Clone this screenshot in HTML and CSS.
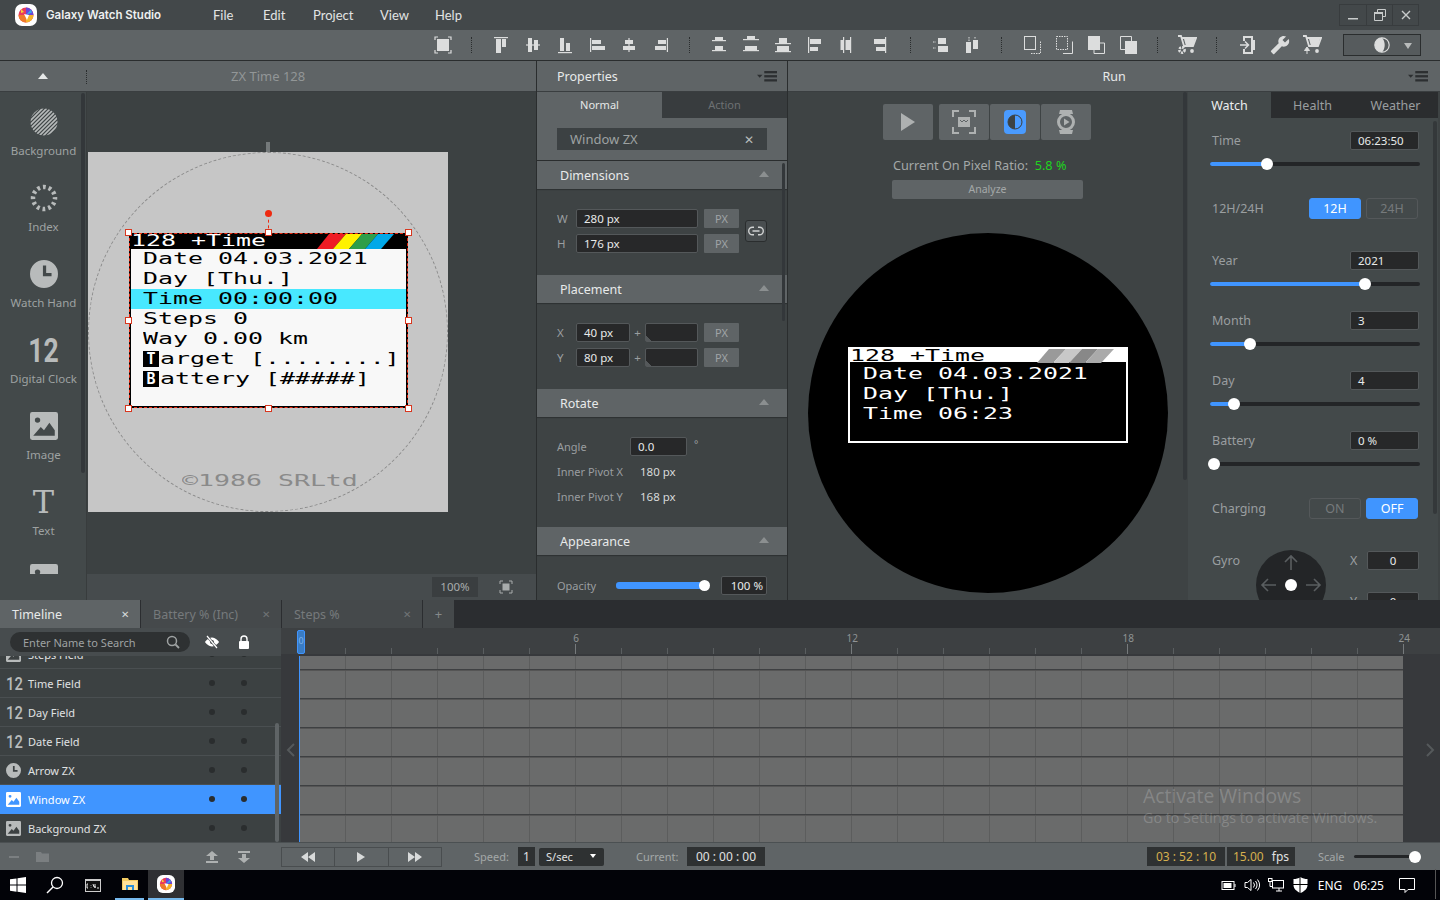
FILE: index.html
```html
<!DOCTYPE html>
<html lang="en">
<head>
<meta charset="utf-8">
<title>Galaxy Watch Studio</title>
<link rel="stylesheet" href="styles.css">
</head>
<body>
<svg class="sprite" width="0" height="0" aria-hidden="true">
  <defs>
    <symbol id="i-full" viewBox="0 0 20 20"><path d="M2 5V2h3M15 2h3v3M18 15v3h-3M5 18H2v-3" fill="none" stroke="currentColor" stroke-width="1.2"/><rect x="4" y="4" width="12" height="12"/></symbol>
    <symbol id="a-top" viewBox="0 0 20 20"><rect x="3" y="2" width="14" height="1.2"/><rect x="5" y="4" width="5" height="14"/><rect x="11" y="4" width="4" height="8"/></symbol>
    <symbol id="a-mid" viewBox="0 0 20 20"><rect x="3" y="9.4" width="14" height="1.2"/><rect x="5" y="3" width="4" height="14"/><rect x="11" y="5" width="4" height="10"/></symbol>
    <symbol id="a-bot" viewBox="0 0 20 20"><rect x="3" y="17" width="14" height="1.2"/><rect x="5" y="3" width="4" height="13"/><rect x="11" y="8" width="4" height="8"/></symbol>
    <symbol id="a-left" viewBox="0 0 20 20"><rect x="3" y="3" width="1.2" height="14"/><rect x="5" y="5" width="9" height="4"/><rect x="5" y="11" width="13" height="4"/></symbol>
    <symbol id="a-cen" viewBox="0 0 20 20"><rect x="9.4" y="3" width="1.2" height="14"/><rect x="6" y="5" width="8" height="4"/><rect x="4" y="11" width="12" height="4"/></symbol>
    <symbol id="a-right" viewBox="0 0 20 20"><rect x="15.8" y="3" width="1.2" height="14"/><rect x="7" y="5" width="8" height="4"/><rect x="4" y="11" width="11" height="4"/></symbol>
    <symbol id="d-a" viewBox="0 0 20 20"><rect x="3" y="5" width="14" height="1.2"/><rect x="3" y="15" width="14" height="1.2"/><rect x="6" y="2" width="8" height="3"/><rect x="6" y="11" width="8" height="4"/></symbol>
    <symbol id="d-b" viewBox="0 0 20 20"><rect x="2" y="4" width="16" height="1.2"/><rect x="2" y="15" width="16" height="1.2"/><rect x="6" y="1" width="8" height="3"/><rect x="4" y="11" width="12" height="4"/></symbol>
    <symbol id="d-c" viewBox="0 0 20 20"><rect x="2" y="16" width="16" height="1.2"/><rect x="2" y="8" width="16" height="1.2"/><rect x="6" y="3" width="8" height="5"/><rect x="4" y="11" width="12" height="5"/></symbol>
    <symbol id="d-d" viewBox="0 0 20 20"><rect x="3" y="2" width="1.2" height="16"/><rect x="5" y="4" width="11" height="5"/><rect x="5" y="12" width="8" height="4"/></symbol>
    <symbol id="d-e" viewBox="0 0 20 20"><rect x="6" y="2" width="1.2" height="16"/><rect x="13" y="2" width="1.2" height="16"/><rect x="3.500" y="5" width="2.500" height="10"/><rect x="8.500" y="5" width="4.500" height="10"/></symbol>
    <symbol id="d-f" viewBox="0 0 20 20"><rect x="16" y="2" width="1.2" height="16"/><rect x="5" y="4" width="11" height="5"/><rect x="7" y="12" width="9" height="4"/></symbol>
    <symbol id="o-a" viewBox="0 0 20 20"><rect x="8" y="3" width="8" height="6"/><rect x="8" y="11" width="10" height="6"/><path d="M3 7h3M3 13h3" stroke="currentColor" stroke-dasharray="1.5 1" fill="none"/></symbol>
    <symbol id="o-b" viewBox="0 0 20 20"><rect x="4" y="7" width="5" height="11"/><rect x="11" y="5" width="5" height="9"/><path d="M7 2v4M13 2v2" stroke="currentColor" stroke-dasharray="1.5 1" fill="none"/></symbol>
    <symbol id="c-a" viewBox="0 0 20 20"><rect x="2.5" y="1.5" width="11" height="13" fill="none" stroke="currentColor"/><path d="M9 18.5h9.500v-12" fill="none" stroke="currentColor" stroke-dasharray="1.500 1"/></symbol>
    <symbol id="c-b" viewBox="0 0 20 20"><rect x="2.500" y="1.500" width="11" height="13" fill="none" stroke="currentColor" stroke-dasharray="1.500 1"/><path d="M9 18.500h9.500v-12" fill="none" stroke="currentColor"/></symbol>
    <symbol id="c-c" viewBox="0 0 20 20"><path d="M8 8h10.500v10.500H8z" fill="none" stroke="currentColor"/><rect x="2" y="1" width="12" height="14"/></symbol>
    <symbol id="c-d" viewBox="0 0 20 20"><path d="M2.500 1.500h11v13h-11z" fill="none" stroke="currentColor"/><rect x="7" y="6" width="12" height="13"/></symbol>
    <symbol id="cart-g" viewBox="0 0 20 20"><path d="M1 1h3l3 10h9l3-8H5" fill="none" stroke="currentColor" stroke-width="1.800"/><path d="M7 4h11l-2 7H9z"/><circle cx="15" cy="16" r="1.900"/><circle cx="5" cy="15" r="2.600" fill="none" stroke="currentColor" stroke-width="2.600" stroke-dasharray="2 1"/></symbol>
    <symbol id="door" viewBox="0 0 20 20"><path d="M5 1h10l0 4 2 0v10l-2 0v4H5v-5h2v3h6V3H7v3H5z"/><path d="M2 10h8M7 6.500l3.500 3.500L7 13.500" fill="none" stroke="currentColor" stroke-width="1.500"/></symbol>
    <symbol id="wrench" viewBox="0 0 24 24"><g transform="matrix(-1 0 0 1 24 0)"><path d="M22.700 19l-9.100-9.100c.9-2.300.4-5-1.500-6.900-2-2-5-2.400-7.400-1.300L9 6 6 9 1.600 4.700C.4 7.100.9 10.100 2.900 12.100c1.900 1.900 4.600 2.400 6.900 1.500l9.100 9.100c.4.4 1 .4 1.400 0l2.300-2.300c.5-.4.500-1.100.100-1.400z"/></g></symbol>
    <symbol id="cart-a" viewBox="0 0 20 20"><path d="M1 1h3l3 10h9l3-8H5" fill="none" stroke="currentColor" stroke-width="1.800"/><path d="M7 4h11l-2 7H9z"/><circle cx="15" cy="16" r="1.900"/><path d="M5 19v-6M2.500 15.500L5 12l2.500 3.500z" fill="currentColor" stroke="currentColor"/></symbol>
    <symbol id="contrast" viewBox="0 0 20 20"><circle cx="10" cy="10" r="8" fill="none" stroke="currentColor" stroke-width="1.300"/><path d="M10 2a8 8 0 0 0 0 16c2-2 3-5 3-8s-1-6-3-8z"/></symbol>
    <symbol id="menu-i" viewBox="0 0 22 12"><rect x="8" y="0" width="14" height="2.500"/><rect x="8" y="4.500" width="14" height="2.500"/><rect x="8" y="9" width="14" height="2.500"/><path d="M0 4h6L3 7.500z"/></symbol>
    <symbol id="pic" viewBox="0 0 26 26"><path fill-rule="evenodd" d="M2 0h22a2 2 0 0 1 2 2v22a2 2 0 0 1-2 2H2a2 2 0 0 1-2-2V2a2 2 0 0 1 2-2zM3 22h20v-5l-5-7-5 7-3-3zM7 5a2.500 2.500 0 1 0 0 5 2.500 2.500 0 0 0 0-5z"/></symbol>
    <symbol id="clock" viewBox="0 0 26 26"><path fill-rule="evenodd" d="M13 0a13 13 0 1 1 0 26a13 13 0 1 1 0-26zM12 5v10h8v-3h-5V5z"/></symbol>
    <symbol id="logo" viewBox="0 0 22 22"><rect width="22" height="22" rx="7" fill="#fff"/><circle cx="11" cy="11" r="7.500" fill="#e83b5d"/><path d="M11 11V3.500A7.500 7.500 0 0 1 18.500 11z" fill="#6b45d8"/><path d="M11 11h7.500A7.500 7.500 0 0 1 11 18.500z" fill="#f5b32c"/><path d="M11 11v7.500A7.500 7.500 0 0 1 3.500 11z" fill="#ef7a2a"/><path d="M11 11l5-5.500 1 3z" fill="#38a9e8"/><path d="M6 5l3 3-3 1z" fill="#f6d13a"/><path d="M9 10l5 1-2 5z" fill="#fff"/></symbol>
  </defs>
</svg>

<div class="app">
  <header class="titlebar">
    <svg class="logo"><use href="#logo"/></svg>
    <span class="app-name">Galaxy Watch Studio</span>
    <nav class="menu"><span>File</span><span>Edit</span><span>Project</span><span>View</span><span>Help</span></nav>
    <div class="winbtns">
      <span class="winbtn"><svg width="12" height="12" viewBox="0 0 12 12"><rect x="1" y="9" width="10" height="1.500"/></svg></span>
      <span class="winbtn"><svg width="14" height="14" viewBox="0 0 14 14"><path d="M4.500 4V1.500h8v7H10M1.500 4.500h8v8h-8z" fill="none" stroke="currentColor"/><rect x="1" y="4" width="9" height="2"/></svg></span>
      <span class="winbtn"><svg width="12" height="12" viewBox="0 0 12 12"><path d="M2 2l8 8M10 2l-8 8" stroke="currentColor" stroke-width="1.400"/></svg></span>
    </div>
  </header>

  <div class="toolbar">
    <svg class="tool"><use href="#i-full"/></svg><i class="tsep"></i>
    <svg class="tool"><use href="#a-top"/></svg><svg class="tool"><use href="#a-mid"/></svg><svg class="tool"><use href="#a-bot"/></svg><svg class="tool"><use href="#a-left"/></svg><svg class="tool"><use href="#a-cen"/></svg><svg class="tool"><use href="#a-right"/></svg><i class="tsep"></i>
    <svg class="tool"><use href="#d-a"/></svg><svg class="tool"><use href="#d-b"/></svg><svg class="tool"><use href="#d-c"/></svg><svg class="tool"><use href="#d-d"/></svg><svg class="tool"><use href="#d-e"/></svg><svg class="tool"><use href="#d-f"/></svg><i class="tsep sep-a"></i>
    <svg class="tool"><use href="#o-a"/></svg><svg class="tool"><use href="#o-b"/></svg><i class="tsep sep-b"></i>
    <svg class="tool"><use href="#c-a"/></svg><svg class="tool"><use href="#c-b"/></svg><svg class="tool"><use href="#c-c"/></svg><svg class="tool"><use href="#c-d"/></svg><i class="tsep sep-c"></i>
    <svg class="tool"><use href="#cart-g"/></svg><i class="tsep sep-d"></i>
    <svg class="tool"><use href="#door"/></svg><svg class="tool"><use href="#wrench"/></svg><svg class="tool"><use href="#cart-a"/></svg>
    <div class="theme-drop"><svg class="theme-icon"><use href="#contrast"/></svg><i class="tri-down"></i></div>
  </div>

  <main class="main">
    <section class="editor">
      <div class="panel-head editor-head"><span class="rail-up"></span><span class="editor-title">ZX Time 128</span></div>
      <div class="editor-body">
        <aside class="rail">
          <div class="rail-list">
            <div class="rail-item">
              <svg class="rail-icon" viewBox="0 0 28 28"><defs><clipPath id="disc"><circle cx="14" cy="14" r="13.500"/></clipPath></defs><g clip-path="url(#disc)" stroke="currentColor" stroke-width="1.700"><path d="M0 5L5 0M0 9L9 0M0 13L13 0M0 17L17 0M0 21L21 0M0 25L25 0M1 28L28 1M5 28L28 5M9 28L28 9M13 28L28 13M17 28L28 17M21 28L28 21"/></g></svg>
              <span>Background</span>
            </div>
            <div class="rail-item">
              <svg class="rail-icon" viewBox="0 0 28 28"><circle cx="14" cy="14" r="11" fill="none" stroke="currentColor" stroke-width="4.500" stroke-dasharray="2.800 2.960" stroke-dashoffset="1.400"/></svg>
              <span>Index</span>
            </div>
            <div class="rail-item"><svg class="rail-icon"><use href="#clock"/></svg><span>Watch Hand</span></div>
            <div class="rail-item"><b class="rail-num">12</b><span>Digital Clock</span></div>
            <div class="rail-item"><svg class="rail-icon"><use href="#pic"/></svg><span>Image</span></div>
            <div class="rail-item"><b class="rail-t">T</b><span>Text</span></div>
            <div class="rail-item"><svg class="rail-icon"><use href="#pic"/></svg></div>
          </div>
          <i class="rail-scroll"></i>
        </aside>
        <div class="canvas-col">
          <div class="canvas">
            <i class="canvas-tick"></i>
            <div class="artboard">
              <i class="dial"></i>
              <div class="zx-window">
                <div class="zx-head"><span class="zx zx-head-text">128 +Time</span>
                  <svg class="zx-rainbow" width="78" height="15" viewBox="0 0 78 15"><path d="M0 15L12 0h17L16 15z" fill="#ee1c25"/><path d="M16 15L29 0h16L32 15z" fill="#fff200"/><path d="M32 15L45 0h16L48 15z" fill="#2e9e4a"/><path d="M48 15L61 0h16L64 15z" fill="#00a8e8"/></svg>
                </div>
                <div class="zx-body">
                  <div class="zx-row"><span class="zx">Date 04.03.2021</span></div>
                  <div class="zx-row"><span class="zx">Day [Thu.]</span></div>
                  <div class="zx-row zx-hi"><span class="zx">Time 00:00:00</span></div>
                  <div class="zx-row"><span class="zx">Steps 0</span></div>
                  <div class="zx-row"><span class="zx">Way 0.00 km</span></div>
                  <div class="zx-row"><i class="zx-key">T</i><span class="zx zx-after">arget [........]</span></div>
                  <div class="zx-row"><i class="zx-key">B</i><span class="zx zx-after">attery [#####]</span></div>
                </div>
              </div>
              <i class="sel-stem"></i><i class="sel-dot"></i>
              <i class="h h1"></i><i class="h h2"></i><i class="h h3"></i><i class="h h4"></i><i class="h h5"></i><i class="h h6"></i><i class="h h7"></i><i class="h h8"></i>
              <span class="zx zx-copy">©1986 SRLtd</span>
            </div>
          </div>
          <div class="canvas-foot"><span class="zoom-box">100%</span><svg class="fit-ico" width="14" height="14" viewBox="0 0 14 14"><path d="M1 4V1h3M10 1h3v3M13 10v3h-3M4 13H1v-3" fill="none" stroke="currentColor"/><rect x="3.500" y="3.500" width="7" height="7"/></svg></div>
        </div>
      </div>
    </section>

    <section class="props">
      <div class="panel-head props-head"><span>Properties</span><svg class="menu-ico"><use href="#menu-i"/></svg></div>
      <div class="tabs2"><span class="tab2 on">Normal</span><span class="tab2">Action</span></div>
      <div class="name-block"><div class="name-input"><span>Window ZX</span><span class="x">✕</span></div></div>

      <div class="sec-head">Dimensions<i class="tri-up"></i></div>
      <div class="sec dims">
        <div class="dims-grid">
          <div class="dims-rows">
            <div class="frow"><label>W</label><span class="inp wide">280 px</span><span class="unit">PX</span></div>
            <div class="frow"><label>H</label><span class="inp wide">176 px</span><span class="unit">PX</span></div>
          </div>
          <span class="link-btn"><svg width="16" height="10" viewBox="0 0 16 10"><path d="M6 1.200H4.500a3.800 3.800 0 0 0 0 7.600H6M10 1.200h1.500a3.800 3.800 0 0 1 0 7.600H10M4.500 5h7" fill="none" stroke="currentColor" stroke-width="1.400"/></svg></span>
        </div>
      </div>

      <div class="sec-head">Placement<i class="tri-up"></i></div>
      <div class="sec dims">
        <div class="dims-rows">
          <div class="frow"><label>X</label><span class="inp short">40 px</span><span class="plus">+</span><span class="inp off"></span><span class="unit">PX</span></div>
          <div class="frow"><label>Y</label><span class="inp short">80 px</span><span class="plus">+</span><span class="inp off"></span><span class="unit">PX</span></div>
        </div>
      </div>

      <div class="sec-head">Rotate<i class="tri-up"></i></div>
      <div class="sec rot">
        <div class="rrow"><label>Angle</label><span class="inp angle">0.0</span><sup class="deg">°</sup></div>
        <div class="rrow"><label>Inner Pivot X</label><span class="rval">180 px</span></div>
        <div class="rrow"><label>Inner Pivot Y</label><span class="rval">168 px</span></div>
      </div>

      <div class="sec-head">Appearance<i class="tri-up"></i></div>
      <div class="sec opa">
        <div class="rrow"><label>Opacity</label><span class="opa-track"><i class="opa-thumb"></i></span><span class="inp opa-val">100 %</span></div>
      </div>
      <i class="props-scroll"></i>
    </section>

    <section class="run">
      <div class="panel-head run-head"><span>Run</span><svg class="menu-ico"><use href="#menu-i"/></svg></div>
      <div class="run-body">
        <div class="preview">
          <div class="run-tools">
            <span class="rbtn solo"><svg width="16" height="20" viewBox="0 0 16 20"><path d="M1 1l14 9-14 9z"/></svg></span>
            <div class="rgroup">
              <span class="rbtn"><svg width="24" height="24" viewBox="0 0 24 24"><path d="M1 7V1h6M17 1h6v6M23 17v6h-6M7 23H1v-6" fill="none" stroke="currentColor" stroke-width="2"/><path d="M6 7h12v10H6z" /><path d="M8 10l2 2 2-2 2 2 2-2" fill="none" stroke="#5f6466"/></svg></span>
              <span class="rbtn"><svg width="22" height="24" viewBox="0 0 22 24"><rect width="22" height="24" rx="4" fill="#4a9bff"/><circle cx="11" cy="12" r="7" fill="#3d4243"/><path d="M11 5a7 7 0 0 1 0 14z" fill="#4a9bff"/><circle cx="11" cy="12" r="7" fill="none" stroke="#3d4243"/></svg></span>
              <span class="rbtn"><svg width="20" height="26" viewBox="0 0 20 26"><path d="M4 1h12l1 4H3zM4 25h12l1-4H3z"/><circle cx="10" cy="13" r="7.500" fill="none" stroke="currentColor" stroke-width="3"/><path d="M8 9.500l5.500 3.500L8 16.500z"/></svg></span>
            </div>
          </div>
          <div class="ratio">Current On Pixel Ratio:&nbsp; <b>5.8 %</b></div>
          <div class="analyze">Analyze</div>
          <div class="sim-watch">
            <div class="sim-window">
              <div class="sim-head"><span class="zx sim-head-text">128 +Time</span>
                <svg class="sim-stripes" width="78" height="14" viewBox="0 0 78 14"><path d="M0 14L12 0h17L16 14z" fill="#9a9a9a"/><path d="M16 14L29 0h16L32 14z" fill="#c8c8c8"/><path d="M32 14L45 0h16L48 14z" fill="#888"/><path d="M48 14L61 0h16L64 14z" fill="#aaa"/></svg>
              </div>
              <div class="sim-row"><span class="zx">Date 04.03.2021</span></div>
              <div class="sim-row"><span class="zx">Day [Thu.]</span></div>
              <div class="sim-row"><span class="zx">Time 06:23</span></div>
            </div>
          </div>
          <i class="run-scroll"></i>
        </div>

        <aside class="sim-panel">
          <div class="sim-tabs"><span class="sim-tab on">Watch</span><span class="sim-tab">Health</span><span class="sim-tab">Weather</span></div>
          <div class="sim-form">
            <div class="ctl">
              <div class="ctl-top"><label>Time</label><span class="inp ctl-val">06:23:50</span></div>
              <div class="track"><i class="fill" style="width:27.100%"></i></div>
            </div>
            <div class="toggle-row"><label>12H/24H</label><span class="tgl on">12H</span><span class="tgl">24H</span></div>
            <div class="ctl after-toggle">
              <div class="ctl-top"><label>Year</label><span class="inp ctl-val">2021</span></div>
              <div class="track"><i class="fill" style="width:73.800%"></i></div>
            </div>
            <div class="ctl">
              <div class="ctl-top"><label>Month</label><span class="inp ctl-val">3</span></div>
              <div class="track"><i class="fill" style="width:19%"></i></div>
            </div>
            <div class="ctl">
              <div class="ctl-top"><label>Day</label><span class="inp ctl-val">4</span></div>
              <div class="track"><i class="fill" style="width:11.400%"></i></div>
            </div>
            <div class="ctl">
              <div class="ctl-top"><label>Battery</label><span class="inp ctl-val">0 %</span></div>
              <div class="track"><i class="fill" style="width:1.900%"></i></div>
            </div>
            <div class="toggle-row"><label>Charging</label><span class="tgl">ON</span><span class="tgl on">OFF</span></div>
            <div class="gyro">
              <label>Gyro</label>
              <div class="joy">
                <svg width="70" height="70" viewBox="0 0 70 70"><path d="M35 6v14M29 12l6-6 6 6M6 35h14M12 29l-6 6 6 6M50 35h14M58 29l6 6-6 6" fill="none" stroke="#5a5e60" stroke-width="1.600"/><circle cx="35" cy="35" r="6" fill="#fff"/></svg>
              </div>
              <div class="gyro-vals">
                <div class="gyro-row"><label>X</label><span class="inp gyro-val">0</span></div>
                <div class="gyro-row"><label>Y</label><span class="inp gyro-val">0</span></div>
              </div>
            </div>
          </div>
          <i class="sim-scroll"></i>
        </aside>
      </div>
    </section>
  </main>

  <section class="timeline">
    <div class="tl-tabs">
      <span class="tl-tab on">Timeline<em>✕</em></span>
      <span class="tl-tab">Battery % (Inc)<em>✕</em></span>
      <span class="tl-tab">Steps %<em>✕</em></span>
      <span class="tl-add">+</span>
    </div>
    <div class="tl-body">
      <div class="layers">
        <div class="layer-tools">
          <div class="search"><span>Enter Name to Search</span><svg width="14" height="14" viewBox="0 0 14 14"><circle cx="6" cy="6" r="4.500" fill="none" stroke="currentColor" stroke-width="1.500"/><path d="M9.500 9.500L13 13" stroke="currentColor" stroke-width="1.800"/></svg></div>
          <svg class="col-ico" width="16" height="14" viewBox="0 0 16 14"><path d="M1 7s3-4.500 7-4.500S15 7 15 7s-3 4.500-7 4.500S1 7 1 7z"/><circle cx="8" cy="7" r="2" fill="#474c4e"/><path d="M3 1l10 12" stroke="#474c4e" stroke-width="2.600"/><path d="M3 1l10 12" stroke="#fff" stroke-width="1.200"/></svg>
          <svg class="col-ico" width="12" height="14" viewBox="0 0 12 14"><path d="M3 6V4a3 3 0 0 1 6 0v2" fill="none" stroke="#fff" stroke-width="1.400"/><rect x="1" y="6" width="10" height="8" rx="1"/></svg>
        </div>
        <div class="layer-list">
          <div class="layer cut"><svg class="l-ico"><use href="#pic"/></svg><span class="l-name">Steps Field</span><i class="dot"></i><i class="dot"></i></div>
          <div class="layer"><b class="l-num">12</b><span class="l-name">Time Field</span><i class="dot"></i><i class="dot"></i></div>
          <div class="layer"><b class="l-num">12</b><span class="l-name">Day Field</span><i class="dot"></i><i class="dot"></i></div>
          <div class="layer"><b class="l-num">12</b><span class="l-name">Date Field</span><i class="dot"></i><i class="dot"></i></div>
          <div class="layer"><svg class="l-ico"><use href="#clock"/></svg><span class="l-name">Arrow ZX</span><i class="dot"></i><i class="dot"></i></div>
          <div class="layer sel"><svg class="l-ico"><use href="#pic"/></svg><span class="l-name">Window ZX</span><i class="dot"></i><i class="dot"></i></div>
          <div class="layer"><svg class="l-ico"><use href="#pic"/></svg><span class="l-name">Background ZX</span><i class="dot"></i><i class="dot"></i></div>
          <i class="layer-scroll"></i>
        </div>
      </div>
      <div class="tracks">
        <div class="ruler">
          <span class="ruler-cell"><em>6</em></span><span class="ruler-cell"><em>12</em></span><span class="ruler-cell"><em>18</em></span><span class="ruler-cell"><em>24</em></span>
        </div>
        <div class="grid-wrap">
          <div class="gutter"><svg width="10" height="16" viewBox="0 0 10 16"><path d="M8 2L2 8l6 6" fill="none" stroke="currentColor" stroke-width="2"/></svg></div>
          <div class="grid"></div>
          <div class="gutter gutter-r"><svg width="10" height="16" viewBox="0 0 10 16"><path d="M2 2l6 6-6 6" fill="none" stroke="currentColor" stroke-width="2"/></svg></div>
        </div>
        <i class="playhead"><span>0</span></i>
      </div>
    </div>
    <div class="tl-foot">
      <div class="foot-left">
        <svg width="10" height="2" viewBox="0 0 10 2" class="dim-ico"><rect width="10" height="2"/></svg>
        <svg width="13" height="11" viewBox="0 0 13 11" class="dim-ico folder"><path d="M0 1h5l1 1.500h7V11H0z"/></svg>
        <svg width="12" height="12" viewBox="0 0 12 12" class="mv-ico up"><path d="M6 0l6 5H8v4H4V5H0zM0 10h12v2H0z"/></svg>
        <svg width="12" height="12" viewBox="0 0 12 12" class="mv-ico"><path d="M0 0h12v2H0zM4 3h4v4h4l-6 5-6-5h4z"/></svg>
      </div>
      <div class="foot-main">
        <div class="transport">
          <span><svg width="14" height="10" viewBox="0 0 14 10"><path d="M7 0v10L0 5zM14 0v10L7 5z"/></svg></span>
          <span><svg width="8" height="10" viewBox="0 0 8 10"><path d="M0 0l8 5-8 5z"/></svg></span>
          <span><svg width="14" height="10" viewBox="0 0 14 10"><path d="M0 0l7 5-7 5zM7 0l7 5-7 5z"/></svg></span>
        </div>
        <label class="speed-label">Speed:</label><span class="num-box speed-n">1</span>
        <span class="unit-select">S/sec<i class="tri-white"></i></span>
        <label class="cur-label">Current:</label><span class="num-box cur">00 : 00 : 00</span>
        <span class="num-box dur">03 : 52 : 10</span>
        <span class="num-box fps"><b>15.00</b> fps</span>
        <label class="scale-label">Scale</label>
        <span class="scale-track"><i></i></span>
      </div>
    </div>
  </section>

  <footer class="taskbar">
    <svg class="tb-win" width="16" height="16" viewBox="0 0 16 16"><path d="M0 2.300l6.500-.9v6.200H0zM7.500 1.300L16 0v7.600H7.500zM0 8.600h6.500v6.100L0 13.800zM7.500 8.600H16V16l-8.500-1.200z" fill="#fff"/></svg>
    <svg class="tb-search" width="18" height="18" viewBox="0 0 18 18"><circle cx="11" cy="7" r="5.500" fill="none" stroke="#fff" stroke-width="1.300"/><path d="M7 11l-6 6" stroke="#fff" stroke-width="1.500"/></svg>
    <svg class="tb-cmd" width="16" height="13" viewBox="0 0 16 13"><rect x=".500" y=".500" width="15" height="12" fill="#111" stroke="#ccc"/><rect y="0" width="16" height="2" fill="#ccc"/><path d="M3 5H2v4h1M6 6v.500M6 8v.500M8 5l1 3h2M10 5v4M12 9h2" stroke="#fff" fill="none" stroke-width=".9"/></svg>
    <span class="tb-slot live"><svg width="16" height="14" viewBox="0 0 16 14"><path d="M0 1h6l1 2h9v10H0z" fill="#f3cd63"/><rect x="1" y="4" width="14" height="9" fill="#ffe29a"/><path d="M4 13V8h8v5h-2v-3H6v3z" fill="#2b8fd8"/></svg></span>
    <span class="tb-slot live active"><svg class="logo" viewBox="0 0 22 22"><use href="#logo"/></svg></span>
    <div class="tray">
      <svg width="15" height="9" viewBox="0 0 14 9"><rect x=".500" y=".500" width="12" height="8" fill="none" stroke="#fff"/><rect x="2" y="2" width="8" height="5" fill="#fff"/><rect x="13" y="3" width="1" height="3" fill="#fff"/></svg>
      <svg width="16" height="14" viewBox="0 0 16 14"><path d="M1 4.500h2.500L7 1.500v11L3.500 9.500H1z" fill="none" stroke="#fff"/><path d="M9.500 4.500a4 4 0 0 1 0 5M11.500 3a6.500 6.500 0 0 1 0 8M13.500 1.500a9 9 0 0 1 0 11" fill="none" stroke="#fff"/></svg>
      <svg class="tray-net" width="16" height="14" viewBox="0 0 16 14"><rect x="4.500" y="2.500" width="11" height="7.500" fill="none" stroke="#fff"/><path d="M8 13h6M11 10v3" stroke="#fff"/><rect x=".500" y=".500" width="3.500" height="3" fill="#000" stroke="#fff"/><path d="M2 3.500v5h3" stroke="#fff" fill="none"/></svg>
      <svg width="15" height="16" viewBox="0 0 15 16"><path d="M7.500 0c2 1.500 4.500 2 7 2v6c0 4-3.500 6.500-7 8-3.500-1.500-7-4-7-8V2c2.500 0 5-.5 7-2z" fill="#fff"/><path d="M7 0v16M0 7.500h15" stroke="#000" stroke-width="1"/></svg>
      <span class="tray-text lang">ENG</span>
      <span class="tray-text clock">06:25</span>
      <svg class="notif" width="16" height="15" viewBox="0 0 16 15"><path d="M.500.500h15v11H9l-3 3v-3H.500z" fill="none" stroke="#fff"/></svg>
      <i class="show-desk"></i>
    </div>
  </footer>

  <div class="activate"><strong>Activate Windows</strong><span>Go to Settings to activate Windows.</span></div>
</div>
</body>
</html>
```
FILE: styles.css
```css
* { box-sizing: border-box; }
html, body { margin: 0; padding: 0; width: 1440px; height: 900px; overflow: hidden; background: #020308; }
body { font-family: "Noto Sans", "Open Sans", sans-serif; font-size: 12px; color: #d5d8d8; }
i, em, b { font-style: normal; }
label { color: #9a9ea0; }
.sprite { position: absolute; }
.app { position: relative; width: 1440px; height: 900px; display: grid; grid-template-rows: 30px 30px 540px 270px 30px; }

/* title bar */
.titlebar { display: flex; align-items: center; background: #43484a; padding-left: 15px; }
.logo { width: 22px; height: 22px; flex: none; }
.app-name { margin-left: 9px; font-family: "Inter", sans-serif; font-size: 11.5px; font-weight: 600; color: #eef0f0; width: 167px; white-space: nowrap; }
.menu { display: flex; font-family: "Lato", sans-serif; font-size: 13px; color: #e2e4e4; }
.menu span:nth-child(1) { width: 50px; }
.menu span:nth-child(2) { width: 50px; }
.menu span:nth-child(3) { width: 67px; }
.menu span:nth-child(4) { width: 55px; }
.winbtns { display: flex; margin-left: auto; margin-right: 21px; border: 1px solid #383c3e; height: 22px; }
.winbtn { width: 26px; display: flex; align-items: center; justify-content: center; color: #c8cbcb; fill: #c8cbcb; border-left: 1px solid #383c3e; }
.winbtn:first-child { border-left: 0; }

/* tool bar */
.toolbar { display: flex; align-items: center; gap: 12px; background: #5f6466; padding: 0 0 1px 433px; }
.tool { width: 20px; height: 20px; flex: none; color: #dcdddd; fill: #dcdddd; }
.tsep { flex: none; width: 1px; height: 16px; margin: 0 7px 0 6px; border-left: 1px dotted #2a2d2e; }
.tsep.sep-a { margin-left: 9px; }
.tsep.sep-b { margin: 0 8px 0 7px; }
.tsep.sep-c { margin: 0 7px; }
.tsep.sep-d { margin: 0 9px 0 7px; }
.theme-drop { flex: none; margin-left: 9px; width: 78px; height: 22px; border: 1px solid #2a2d2e; display: flex; align-items: center; justify-content: center; position: relative; background: #565b5d; }
.theme-icon { width: 18px; height: 18px; color: #dcdddd; fill: #dcdddd; }
.tri-down { position: absolute; right: 8px; top: 8px; border: 4px solid transparent; border-top: 6px solid #b8bbbb; border-bottom: 0; }

/* main */
.main { display: grid; grid-template-columns: 537px 251px 652px; grid-template-rows: 540px; min-height: 0; overflow: hidden; background: #2a2d2e; }
.panel-head { height: 32px; flex: none; background: #5f6466; border-top: 1px solid #2a2d2e; border-bottom: 1px solid #3a3e40; display: flex; align-items: center; font-size: 12.5px; }
.menu-ico { width: 20px; height: 11px; fill: #2c2f31; flex: none; }

/* editor */
.editor { display: flex; flex-direction: column; min-width: 0; min-height: 0; background: #3c4142; border-right: 1px solid #2a2d2e; }
.editor-head { position: relative; }
.rail-up { margin-left: 38px; border: 5px solid transparent; border-bottom: 6px solid #e6e8e8; border-top: 0; }
.editor-head::after { content: ""; position: absolute; left: 86px; top: 9px; height: 14px; border-left: 1px dotted #2a2d2e; }
.editor-title { position: absolute; left: 231px; color: #929697; font-size: 13px; }
.editor-body { flex: 1; display: flex; min-height: 0; }
.rail { width: 87px; flex: none; background: #43494a; position: relative; border-right: 1px solid #383c3d; }
.rail-list { height: 482px; overflow: hidden; }
.rail-item { height: 76px; display: flex; flex-direction: column; align-items: center; width: 87px; padding-top: 16px; color: #a8acac; font-size: 11.5px; }
.rail-item span { margin-top: 7px; line-height: 15px; color: #9ea2a2; }
.rail-icon { width: 28px; height: 28px; color: #b8bbbb; fill: #b8bbbb; flex: none; }
.rail-num { height: 28px; font-family: "Roboto", sans-serif; font-size: 34px; line-height: 28px; font-weight: 700; color: #b8bbbb; transform: scaleX(.78); }
.rail-t { height: 28px; font-family: "DejaVu Serif", serif; font-size: 32px; line-height: 28px; font-weight: 400; color: #b8bbbb; }
.rail-scroll { position: absolute; left: 81px; top: 1px; width: 4px; height: 380px; background: #33373a; border-radius: 2px; }
.canvas-col { flex: 1; display: flex; flex-direction: column; min-width: 0; min-height: 0; }
.canvas { flex: 1; position: relative; background: #3c4142; overflow: hidden; min-height: 0; }
.canvas-tick { position: absolute; left: 179px; top: 50px; width: 4px; height: 20px; background: #74797a; }
.canvas-foot { height: 26px; flex: none; background: #464b4d; display: flex; align-items: center; padding-left: 345px; }
.zoom-box { width: 46px; height: 20px; background: #3a3e40; color: #a8acac; text-align: center; line-height: 20px; font-size: 11.5px; }
.fit-ico { margin-left: 21px; color: #a8acac; fill: #a8acac; }

/* artboard (free canvas) */
.artboard { position: absolute; left: 1px; top: 60px; width: 360px; height: 360px; background: #c6c6c6; }
.dial { position: absolute; inset: 0; border: 1px dashed #8c8c8c; border-radius: 50%; }
.zx { display: inline-block; font-family: "DejaVu Sans Mono", monospace; font-size: 15px; line-height: 20px; white-space: pre; transform: scaleX(1.66); transform-origin: 0 50%; color: inherit; }
.zx-window { position: absolute; left: 41px; top: 81px; width: 279px; height: 175px; background: #f8f8f8; border: 2px solid #000; border-top: 0; color: #000; }
.zx-head { height: 16px; margin: 0 -2px; width: 279px; background: #000; color: #fff; position: relative; }
.zx-head-text { position: absolute; left: 2px; top: 0; line-height: 16px; }
.zx-rainbow { position: absolute; left: 188px; top: 1px; }
.zx-row { height: 20px; padding-left: 12px; display: flex; align-items: center; overflow: hidden; white-space: nowrap; }
.zx-hi { background: #48e8ff; }
.zx-key { width: 16px; height: 16px; margin-right: 1px; background: #000; color: #fff; font-family: "DejaVu Sans Mono", monospace; font-size: 15px; font-weight: 700; line-height: 16px; text-align: center; flex: none; }
.zx-copy { position: absolute; left: 94px; top: 319px; color: #8a8a8a; transform: scaleX(1.77); }
.sel-stem { position: absolute; left: 180px; top: 62px; height: 20px; border-left: 1px dashed #ee2a10; }
.sel-dot { position: absolute; left: 177px; top: 58px; width: 7px; height: 7px; border-radius: 50%; background: #ee2a10; }
.zx-window::after { content: ""; position: absolute; left: -2px; top: 0; right: -2px; bottom: -2px; border: 1px dashed #ee2a10; }
.h { position: absolute; width: 7px; height: 7px; background: #fff; border: 1px solid #d8371f; }
.h1 { left: 37px; top: 77px; } .h2 { left: 177px; top: 77px; } .h3 { left: 317px; top: 77px; }
.h4 { left: 37px; top: 165px; } .h5 { left: 317px; top: 165px; }
.h6 { left: 37px; top: 253px; } .h7 { left: 177px; top: 253px; } .h8 { left: 317px; top: 253px; }

/* properties */
.props { display: flex; flex-direction: column; position: relative; background: #3e4344; border-right: 1px solid #2a2d2e; min-width: 0; min-height: 0; overflow: hidden; }
.props-head { padding: 0 10px 0 20px; justify-content: space-between; color: #e8eaea; }
.tabs2 { height: 26px; display: flex; flex: none; }
.tab2 { width: 125px; text-align: center; line-height: 26px; font-size: 11px; background: #383c3e; color: #6d7173; }
.tab2.on { background: #5f6466; color: #e6e8e8; }
.name-block { height: 43px; flex: none; background: #5f6466; padding: 10px 20px 0; border-bottom: 1px solid #2a2d2e; }
.name-input { height: 22px; background: #3c4143; display: flex; align-items: center; justify-content: space-between; padding: 0 13px; color: #9ea2a2; font-size: 13px; }
.name-input .x { font-size: 12px; color: #b8bbbb; }
.sec-head { height: 28px; flex: none; background: #5f6466; display: flex; align-items: center; padding-left: 23px; color: #e8eaea; font-size: 12.5px; position: relative; box-shadow: 0 1px 1px rgba(0,0,0,.25); }
.tri-up { position: absolute; left: 222px; top: 10px; border: 5px solid transparent; border-bottom: 6px solid #8b8f90; border-top: 0; }
.sec { flex: none; padding-left: 20px; font-size: 11.5px; }
.dims { height: 86px; padding-top: 20px; }
.dims-grid { display: flex; align-items: center; gap: 6px; }
.dims-rows { display: flex; flex-direction: column; gap: 6px; }
.frow { display: flex; align-items: center; height: 19px; }
.frow label { width: 19px; font-size: 11.5px; }
.inp { display: inline-block; height: 19px; line-height: 17px; background: #272829; border: 1px solid #54585a; border-radius: 2px; color: #e8eaea; font-size: 11.5px; padding-left: 7px; }
.wide { width: 122px; }
.short { width: 54px; }
.off { width: 53px; background: linear-gradient(45deg, #54585a 0 4px, #272829 4px); }
.plus { width: 15px; text-align: center; color: #9a9ea0; }
.unit { margin-left: 6px; width: 35px; height: 19px; line-height: 19px; text-align: center; background: #5f6466; color: #a0a4a6; font-size: 11px; border-radius: 1px; }
.link-btn { width: 22px; height: 22px; border: 1px solid #2a2d2e; background: #494e50; border-radius: 3px; display: flex; align-items: center; justify-content: center; color: #d0d2d2; }
.rot { height: 110px; padding-top: 20px; display: flex; flex-direction: column; gap: 6px; }
.rrow { display: flex; align-items: center; height: 19px; position: relative; }
.rrow label { width: 73px; font-size: 11px; }
.angle { width: 57px; padding-left: 7px; }
.deg { margin-left: 7px; color: #9a9ea0; font-size: 10px; line-height: 10px; margin-top: -6px; }
.rval { margin-left: 10px; color: #d8dada; font-size: 11.5px; }
.opa { padding-top: 21px; height: 45px; }
.opa .rrow label { width: 59px; }
.opa-track { width: 89px; height: 7px; background: #4095ff; border-radius: 3px; position: relative; }
.opa-thumb { position: absolute; right: -5px; top: -2px; width: 11px; height: 11px; border-radius: 50%; background: #fff; }
.opa-val { margin-left: 16px; width: 46px; text-align: right; padding: 0 3px 0 0; }
.props-scroll { position: absolute; left: 245px; top: 103px; width: 3px; height: 158px; background: #33373a; border-radius: 2px; }

/* run */
.run { display: flex; flex-direction: column; background: #3e4344; min-width: 0; min-height: 0; position: relative; overflow: hidden; }
.run-head { justify-content: center; position: relative; color: #e8eaea; }
.run-head .menu-ico { position: absolute; right: 12px; top: 10px; }
.run-body { flex: 1; display: flex; min-height: 0; }
.preview { width: 400px; flex: none; position: relative; display: flex; flex-direction: column; align-items: flex-start; padding: 12px 0 0 95px; overflow: hidden; }
.run-tools { display: flex; gap: 6px; }
.rbtn { width: 50px; height: 36px; background: #5f6466; display: flex; align-items: center; justify-content: center; color: #aeb1b1; fill: #aeb1b1; border-radius: 2px; }
.rgroup { display: flex; gap: 1px; }
.ratio { margin-top: 16px; margin-left: 10px; line-height: 18px; color: #a4a8a8; font-size: 12.7px; white-space: nowrap; }
.ratio b { color: #1fd31f; font-weight: 400; }
.analyze { margin-top: 6px; margin-left: 9px; width: 191px; height: 19px; background: #5f6466; text-align: center; line-height: 18px; font-size: 10.5px; color: #a4a8a8; border-radius: 2px; }
.sim-watch { margin-top: 34px; margin-left: -75px; width: 360px; height: 360px; flex: none; border-radius: 50%; background: #000; padding: 114px 0 0 40px; }
.sim-window { width: 280px; height: 96px; border: 2px solid #fff; color: #fff; }
.sim-head { height: 13px; background: #fff; color: #000; position: relative; }
.sim-head-text { position: absolute; left: 0; top: 0; line-height: 14px; }
.sim-stripes { position: absolute; left: 187px; top: 0; }
.sim-row { height: 20px; padding-left: 13px; display: flex; align-items: center; white-space: nowrap; overflow: hidden; }
.sim-window .sim-row:nth-child(2) { margin-top: 2px; }
.run-scroll { position: absolute; left: 395px; top: 0; width: 4px; height: 388px; background: #33373a; border-radius: 2px; }

.sim-panel { width: 250px; flex: none; background: #43494a; position: relative; overflow: hidden; }
.sim-tabs { height: 26px; display: flex; background: #2b2d2f; }
.sim-tab { width: 83px; text-align: center; line-height: 27px; color: #9a9ea0; font-size: 12.5px; }
.sim-tab.on { background: #43494a; color: #eceeee; }
.sim-form { padding: 13px 0 0 22px; width: 232px; }
.ctl { margin-bottom: 21px; }
.ctl-top { display: flex; justify-content: space-between; align-items: center; height: 19px; }
.ctl-top label, .toggle-row label, .gyro > label { font-size: 12.5px; padding-left: 2px; }
.ctl-val { width: 69px; }
.track { margin-top: 8px; height: 12px; width: 210px; position: relative; }
.track::before { content: ""; position: absolute; left: 0; right: 0; top: 4px; height: 4px; background: #232527; border-radius: 2px; }
.fill { position: absolute; left: 0; top: 4px; height: 4px; background: #4095ff; border-radius: 2px; }
.fill::after { content: ""; position: absolute; right: -6px; top: -4px; width: 12px; height: 12px; border-radius: 50%; background: #fff; }
.ctl-top, .toggle-row, .gyro { width: 209px; }
.toggle-row { display: flex; align-items: center; gap: 5px; height: 21px; margin-top: 28px; }
.toggle-row label { width: 89px; margin-right: 5px; }
.tgl { width: 52px; height: 21px; line-height: 19px; text-align: center; border: 1px solid #54585a; border-radius: 3px; color: #767a7c; font-size: 12.5px; }
.tgl.on { background: #4095ff; border-color: #4095ff; color: #fff; }
.after-toggle { margin-top: 32px; }
.gyro { display: flex; margin-top: 32px; position: relative; }
.gyro > label { width: 46px; line-height: 19px; }
.joy { width: 70px; height: 70px; border-radius: 50%; background: #232527; margin-top: -1px; flex: none; }
.gyro-vals { margin-left: 24px; display: flex; flex-direction: column; gap: 22px; }
.gyro-row { display: flex; align-items: center; height: 19px; }
.gyro-row label { width: 17px; font-size: 12.5px; }
.gyro-val { width: 52px; text-align: center; padding-left: 0; }
.sim-scroll { position: absolute; left: 245px; top: 29px; width: 4px; height: 393px; background: #34383a; border-radius: 2px; }

/* timeline */
.timeline { display: flex; flex-direction: column; background: #3c4142; min-height: 0; }
.tl-tabs { height: 28px; flex: none; display: flex; background: #2b2d30; }
.tl-tab { width: 140px; margin-right: 1px; padding: 1px 0 0 12px; background: #45494b; color: #767a7c; font-size: 12.5px; line-height: 27px; position: relative; }
.tl-tab.on { background: #5f6466; color: #e8eaea; }
.tl-tab em { position: absolute; right: 11px; top: 1px; font-size: 10px; color: #707476; }
.tl-tab.on em { color: #d8dada; }
.tl-add { width: 31px; background: #45494b; text-align: center; line-height: 28px; color: #85898b; font-size: 13px; }
.tl-body { flex: 1; display: flex; min-height: 0; }
.layers { width: 281px; flex: none; display: flex; flex-direction: column; min-height: 0; }
.layer-tools { height: 28px; flex: none; background: #474c4e; display: flex; align-items: center; padding-left: 10px; position: relative; z-index: 1; }
.search { width: 180px; height: 20px; border-radius: 10px; background: #2e3132; display: flex; align-items: center; justify-content: space-between; padding: 0 10px 0 13px; color: #9ea2a2; font-size: 11px; }
.col-ico { fill: #fff; flex: none; margin-left: 14px; }
.col-ico + .col-ico { margin-left: 18px; }
.layer-list { flex: 1; position: relative; overflow: hidden; display: flex; flex-direction: column; }
.layer { flex: none; height: 29px; display: flex; align-items: center; padding-left: 6px; border-bottom: 1px solid #4a4f51; color: #e0e2e2; font-size: 11px; }
.layer.cut { margin-top: -16px; }
.l-num { width: 22px; font-family: "Roboto", sans-serif; font-size: 18px; font-weight: 500; color: #b8bbbb; flex: none; transform: scaleX(.82); transform-origin: 0 50%; }
.l-ico { width: 15px; height: 15px; fill: #b8bbbb; flex: none; margin-right: 7px; }
.l-name { width: 181px; flex: none; }
.dot { width: 6px; height: 6px; border-radius: 50%; background: #2a2d2e; flex: none; }
.dot + .dot { margin-left: 26px; }
.layer.sel { background: #4095ff; color: #fff; border-bottom-color: #4095ff; }
.layer.sel .l-ico { fill: #fff; }
.layer-scroll { position: absolute; left: 275px; top: 67px; width: 4px; height: 119px; background: #5f6466; border-radius: 2px; }
.tracks { flex: 1; display: flex; flex-direction: column; position: relative; min-width: 0; }
.ruler { height: 28px; flex: none; display: flex; padding-left: 19px; background: #3d4042 linear-gradient(to right, transparent 0 45px, #5a5e60 45px 46px) 19px 100% / 46px 6px repeat-x; color: #8f9394; font-size: 10px; border-bottom: 2px solid #37393c; }
.ruler-cell { width: 276px; flex: none; display: flex; justify-content: flex-end; padding-top: 4px; position: relative; }
.ruler-cell em { margin-right: -6px; line-height: 12px; }
.ruler-cell:nth-child(1) em { margin-right: -3px; }
.ruler-cell::after { content: ""; position: absolute; right: 0; bottom: 0; height: 10px; border-right: 1px solid #767a7c; }
.grid-wrap { flex: 1; display: flex; min-height: 0; background: #37383b; }
.gutter { width: 19px; flex: none; background: #37393c; color: #55595b; display: flex; align-items: center; justify-content: center; }
.gutter-r { width: 37px; padding-left: 17px; }
.grid { width: 1103px; flex: none; background-color: #6a6b6b; background-image: linear-gradient(to bottom, #3e4042 0 1px, #555 1px 2px, transparent 2px), linear-gradient(to right, transparent 0 45px, #5c5d5d 45px 46px); background-size: 100% 29px, 46px 100%; background-position: 0 13px, 0 0; }
.playhead { position: absolute; left: 18px; top: 28px; bottom: 0; border-left: 1px solid #4095ff; }
.playhead span { position: absolute; left: -3px; top: -26px; width: 8px; height: 24px; background: #3a7cc4; border: 1px solid #4095ff; border-radius: 2px; color: #7fb2e8; font-size: 9px; text-align: center; line-height: 20px; }
.tl-foot { height: 27px; flex: none; display: flex; background: #5f6466; box-shadow: 0 -1px 0 #4b5052; position: relative; }
.foot-left { width: 281px; flex: none; display: flex; align-items: center; padding-left: 9px; }
.dim-ico { fill: #7b7f81; }
.folder { margin-left: 17px; }
.mv-ico { fill: #aeb1b1; margin-left: 20px; }
.mv-ico.up { margin-left: 157px; }
.foot-main { flex: 1; display: flex; align-items: center; font-size: 11px; }
.transport { display: flex; width: 161px; height: 20px; border: 1px solid #494d4f; }
.transport span { flex: 1; display: flex; align-items: center; justify-content: center; border-left: 1px solid #494d4f; fill: #d8dada; }
.transport span:first-child { border-left: 0; }
.speed-label { margin-left: 32px; width: 44px; color: #a4a8a8; }
.num-box { display: inline-block; height: 19px; line-height: 19px; background: #2e3132; color: #e0e2e2; text-align: center; font-size: 12px; }
.speed-n { width: 17px; }
.unit-select { margin-left: 4px; width: 65px; height: 18px; line-height: 18px; background: #2e3132; border-radius: 2px; padding-left: 7px; color: #e0e2e2; position: relative; }
.tri-white { position: absolute; right: 8px; top: 6px; border: 3.500px solid transparent; border-top: 4px solid #fff; border-bottom: 0; }
.cur-label { margin-left: 32px; width: 51px; color: #a4a8a8; }
.cur { width: 78px; }
.dur { margin-left: 382px; width: 78px; color: #d7b04e; }
.fps { margin-left: 2px; width: 68px; color: #e0e2e2; }
.fps b { color: #d7b04e; font-weight: 400; margin-right: 5px; }
.scale-label { margin-left: 23px; width: 36px; color: #a4a8a8; }
.scale-track { width: 61px; height: 3px; background: #232527; border-radius: 2px; position: relative; }
.scale-track i { position: absolute; right: -6px; top: -4.500px; width: 12px; height: 12px; border-radius: 50%; background: #fff; }

/* task bar */
.taskbar { background: #020308; display: flex; align-items: center; position: relative; }
.tb-win { margin-left: 10px; }
.tb-search { margin-left: 20px; }
.tb-cmd { margin-left: 21px; }
.tb-slot { height: 30px; display: flex; align-items: center; justify-content: center; border-bottom: 2px solid transparent; }
.tb-slot.live { width: 29px; margin-left: 14px; border-bottom-color: #76b9ed; }
.tb-slot.active { width: 36px; margin-left: 4px; background: #2f3033; }
.tb-slot .logo { width: 18px; height: 18px; }
.tray { margin-left: auto; display: flex; align-items: center; padding-right: 25px; position: relative; }
.tray svg { margin-right: 8px; }
.tray .tray-net { margin-right: 9px; }
.tray-text { color: #fff; font-size: 12px; }
.lang { margin-left: 2px; }
.clock { margin-left: 11px; }
.tray .notif { margin-left: 15px; margin-right: 0; }
.show-desk { position: absolute; right: 4px; top: -8px; height: 30px; border-left: 1px solid #555; }

.activate { position: absolute; left: 1143px; top: 783px; display: flex; flex-direction: column; color: rgba(255,255,255,.2); font-family: "Open Sans", sans-serif; pointer-events: none; }
.activate strong { font-weight: 400; font-size: 19.3px; line-height: 25px; }
.activate span { font-size: 14.3px; line-height: 20px; }
```
